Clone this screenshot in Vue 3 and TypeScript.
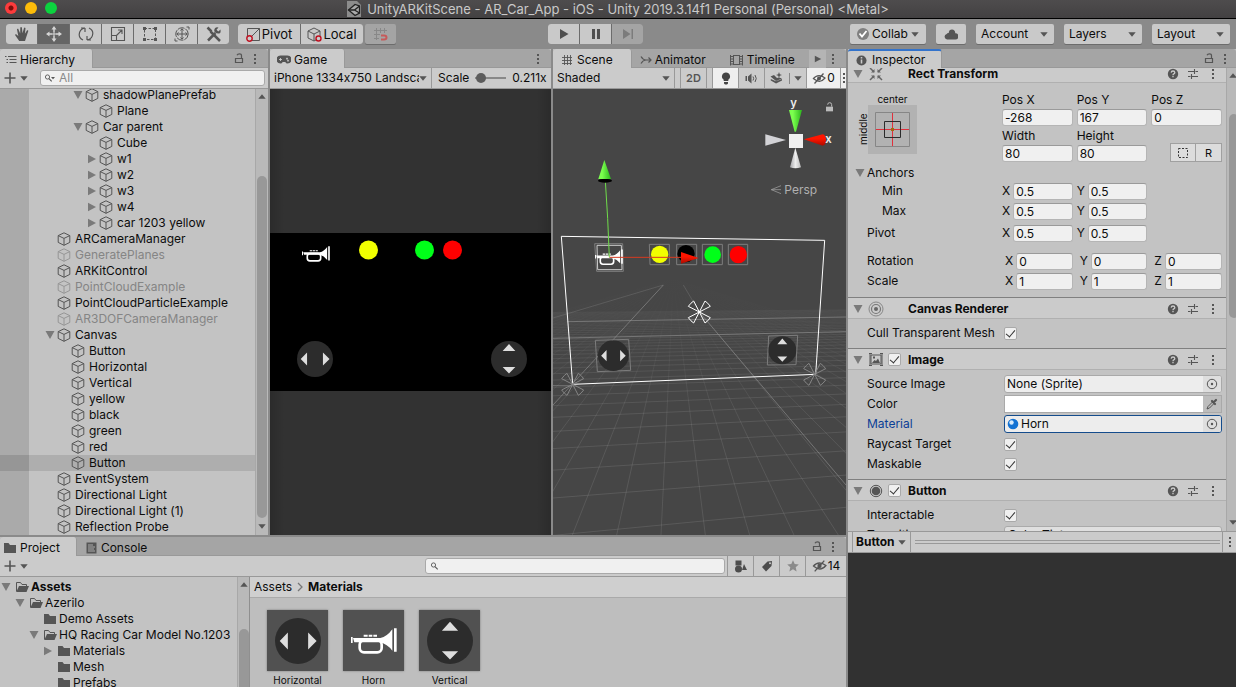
<script setup lang="ts">
import { ref } from 'vue'

interface Node { name: string; level: number; arrow?: 'open' | 'closed'; off?: boolean; selected?: boolean }
interface Folder { name: string; level: number; arrow?: 'open' | 'closed'; bold?: boolean }

const nodes: Node[] = [
  { name: 'shadowPlanePrefab', level: 2, arrow: 'open' },
  { name: 'Plane', level: 3 },
  { name: 'Car parent', level: 2, arrow: 'open' },
  { name: 'Cube', level: 3 },
  { name: 'w1', level: 3, arrow: 'closed' },
  { name: 'w2', level: 3, arrow: 'closed' },
  { name: 'w3', level: 3, arrow: 'closed' },
  { name: 'w4', level: 3, arrow: 'closed' },
  { name: 'car 1203 yellow', level: 3, arrow: 'closed' },
  { name: 'ARCameraManager', level: 0 },
  { name: 'GeneratePlanes', level: 0, off: true },
  { name: 'ARKitControl', level: 0 },
  { name: 'PointCloudExample', level: 0, off: true },
  { name: 'PointCloudParticleExample', level: 0 },
  { name: 'AR3DOFCameraManager', level: 0, off: true },
  { name: 'Canvas', level: 0, arrow: 'open' },
  { name: 'Button', level: 1 },
  { name: 'Horizontal', level: 1 },
  { name: 'Vertical', level: 1 },
  { name: 'yellow', level: 1 },
  { name: 'black', level: 1 },
  { name: 'green', level: 1 },
  { name: 'red', level: 1 },
  { name: 'Button', level: 1, selected: true },
  { name: 'EventSystem', level: 0 },
  { name: 'Directional Light', level: 0 },
  { name: 'Directional Light (1)', level: 0 },
  { name: 'Reflection Probe', level: 0 },
]

const folders: Folder[] = [
  { name: 'Assets', level: 0, arrow: 'open', bold: true },
  { name: 'Azerilo', level: 1, arrow: 'open' },
  { name: 'Demo Assets', level: 2 },
  { name: 'HQ Racing Car Model No.1203', level: 2, arrow: 'open' },
  { name: 'Materials', level: 3, arrow: 'closed' },
  { name: 'Mesh', level: 3 },
  { name: 'Prefabs', level: 3 },
]

const materials = [
  { name: 'Horizontal', icon: 'dial-h' },
  { name: 'Horn', icon: 'horn' },
  { name: 'Vertical', icon: 'dial-v' },
]

const tools = ['hand', 'move', 'rotate', 'scale', 'rect', 'transform', 'custom']
const menus = ['Account', 'Layers', 'Layout']

const vectors = ref([
  { label: 'Min', kind: 'anchor', axes: [['X', '0.5'], ['Y', '0.5']] },
  { label: 'Max', kind: 'anchor', axes: [['X', '0.5'], ['Y', '0.5']] },
  { label: 'Pivot', kind: 'pivot', axes: [['X', '0.5'], ['Y', '0.5']] },
  { label: 'Rotation', kind: 'rotation', axes: [['X', '0'], ['Y', '0'], ['Z', '0']] },
  { label: 'Scale', kind: 'size', axes: [['X', '1'], ['Y', '1'], ['Z', '1']] },
])
const position = ref([['Pos X', '-268'], ['Pos Y', '167'], ['Pos Z', '0']])
const size = ref([['Width', '80'], ['Height', '80']])
const scale = ref(5)
const cull = ref(true)
const imageOn = ref(true)
const buttonOn = ref(true)
const raycast = ref(true)
const maskable = ref(true)
const interactable = ref(true)
const color = ref('#ffffff')

// Ground plane of the scene view: rows recede towards the horizon, rays fan out from it.
const horizon = 147
const rows = Array.from({ length: 40 }, (_, k) => ({
  y1: horizon + 1 / (0.0013 + 0.000222 * k),
  y2: horizon + 1 / (0.00146 + 0.00024 * k),
  o: Math.max(0.06, 0.18 - k * 0.004),
}))
const rays = Array.from({ length: 40 }, (_, k) => 67 + 133 * (k - 18))
</script>

<template>
  <svg class="sprite" aria-hidden="true">
    <symbol id="cube" viewBox="0 0 14 14"><path d="M7 .8 12.8 3.6V10.4L7 13.3 1.2 10.4V3.6ZM1.2 3.6 7 6.4 12.8 3.6M7 6.4V13.3" fill="none" stroke="currentColor" stroke-linejoin="round" /></symbol>
    <symbol id="down" viewBox="0 0 10 10"><path d="M.5 1h9L5 9Z" fill="currentColor" /></symbol>
    <symbol id="right" viewBox="0 0 10 10"><path d="M1 .8v8.4L9 5Z" fill="currentColor" /></symbol>
    <symbol id="caret" viewBox="0 0 8 5"><path d="M.3.3h7.4L4 4.7Z" fill="currentColor" /></symbol>
    <symbol id="caret-up" viewBox="0 0 8 5"><path d="M.3 4.7h7.4L4 .3Z" fill="currentColor" /></symbol>
    <symbol id="dots" viewBox="0 0 4 12"><path d="M1 1h2v2H1zM1 5h2v2H1zM1 9h2v2H1z" fill="currentColor" /></symbol>
    <symbol id="lock" viewBox="0 0 10 11"><path d="M1.500 5.500h7v4h-7ZM7.500 5V2.600Q7.500.8 5.500.8T3 2.200" fill="none" stroke="currentColor" stroke-width="1.200" /></symbol>
    <symbol id="list" viewBox="0 0 12 10"><path d="M3 1.500h8.500M4.500 4.500h7M4.500 7.500h7" stroke="currentColor" fill="none" /><path d="M0 1h1.500v1H0zM1.500 4H3v1H1.500zM1.500 7H3v1H1.500z" fill="currentColor" /></symbol>
    <symbol id="pad" viewBox="0 0 14 9"><path d="M3.500.5h7A4 4 0 0 1 10.500 8.500Q9 8.500 8.300 7H5.700Q5 8.500 3.500 8.500a4 4 0 0 1 0-8Z" fill="currentColor" /><path d="M2 4.500h3M3.500 3v3M9.500 3.200h1v1h-1zM10.500 5.200h1v1h-1z" stroke="#cbcbcb" stroke-width=".9" /></symbol>
    <symbol id="hash" viewBox="0 0 12 12"><path d="M3.500 1v10M6.500 1v10M9.500 1v10M1 3.500h10M1 6.500h10M1 9.500h10" stroke="currentColor" stroke-width=".9" /></symbol>
    <symbol id="anim" viewBox="0 0 12 12"><path d="M1 2.500Q3 6 6 6h5M1 9.500Q3 6 6 6M8.500 3.500 11 6 8.500 8.500" fill="none" stroke="currentColor" stroke-width="1.200" /></symbol>
    <symbol id="film" viewBox="0 0 13 12"><path d="M3.500 1v10M9.500 1v10M3.500 1.500h6M3.500 10.500h6M.5 1v10.500M12.500 1v10.500" stroke="currentColor" fill="none" /><path d="M1 2.500h2M1 5h2M1 7.500h2M1 10h2M10 2.500h2M10 5h2M10 7.500h2M10 10h2" stroke="currentColor" /></symbol>
    <symbol id="info" viewBox="0 0 12 12"><circle cx="6" cy="6" r="5.500" fill="currentColor" /><path d="M6 5v4.300M6 2.300v1.500" stroke="#cbcbcb" stroke-width="1.700" /></symbol>
    <symbol id="help" viewBox="0 0 12 12"><circle cx="6" cy="6" r="5.200" fill="currentColor" /><path d="M4.200 4.600Q4.300 3 6 3T7.800 4.500Q7.800 5.400 6.800 5.800 6 6.200 6 7.200M6 8v1.300" fill="none" stroke="#cbcbcb" stroke-width="1.300" /></symbol>
    <symbol id="preset" viewBox="0 0 12 12"><path d="M1 3.500h6M8.500 3.500H11M1 8.500h2.500M5 8.500h6M7.500 1v5M4.500 6v5" stroke="currentColor" stroke-width="1.100" /></symbol>
    <symbol id="search" viewBox="0 0 12 10"><circle cx="4.500" cy="4" r="2.100" fill="none" stroke="currentColor" stroke-width=".9" /><path d="m6 5.600 2.700 2.700" stroke="currentColor" stroke-width="1.100" /></symbol>
    <symbol id="search-menu" viewBox="0 0 12 10"><circle cx="3.500" cy="4" r="2.100" fill="none" stroke="currentColor" stroke-width=".9" /><path d="m5 5.600 2.700 2.700" stroke="currentColor" stroke-width="1.100" /><path d="M7 4h4L9 6.200Z" fill="currentColor" /></symbol>
    <symbol id="plus" viewBox="0 0 12 12"><path d="M6 .5v11M.5 6h11" stroke="currentColor" stroke-width="1.600" /></symbol>
    <symbol id="folder" viewBox="0 0 14 12"><path d="M1 1h4.500l1.500 2h6v8H1Z" fill="currentColor" /></symbol>
    <symbol id="folder-open" viewBox="0 0 14 12"><path d="M1.500 10.500V1.500H5.500L7 3.500h4.500V5" fill="none" stroke="currentColor" /><path d="M4 5h10l-2.500 6H1.300Z" fill="currentColor" /></symbol>
    <symbol id="console" viewBox="0 0 11 12"><path d="M.5.500h10v11H.5Z" fill="currentColor" /><path d="M2 3h5M2 5h7M2 7h6M2 9h7" stroke="#b5b5b5" stroke-width=".9" /></symbol>
    <symbol id="eye" viewBox="0 0 14 11"><path d="M1 6q5-6 12-1-5 6-11 1" fill="none" stroke="currentColor" stroke-width="1.200" /><circle cx="7" cy="5.500" r="2" fill="currentColor" /><path d="m2.500 10.500 9-10" stroke="currentColor" stroke-width="1.300" /></symbol>
    <symbol id="target" viewBox="0 0 12 12"><circle cx="6" cy="6" r="4.700" fill="none" stroke="currentColor" /><circle cx="6" cy="6" r="1.200" fill="currentColor" /></symbol>
    <symbol id="hand" viewBox="0 0 16 16"><path d="M5.200 15 1.200 9.300Q.8 8 2.200 8.300L4.300 10 3 3.500Q3 2.300 4.200 2.800L6.200 7.500 6.300 1.500Q7 .5 7.900 1.500L8.500 7.200 10 1.900Q11 1.200 11.500 2.200L10.900 7.800 13.100 4.300Q14.300 3.800 14.300 5L12.300 11 11 15Z" fill="currentColor" /></symbol>
    <symbol id="move" viewBox="0 0 16 16"><path d="M8 2v12M2 8h12" stroke="currentColor" stroke-width="1.500" stroke-dasharray="4.500 3" /><path d="M8 0l2.500 3.500h-5ZM8 16l2.500-3.500h-5ZM0 8l3.500-2.500v5ZM16 8l-3.500-2.500v5Z" fill="currentColor" /><path d="M6.500 8h3M8 6.500v3" stroke="currentColor" /></symbol>
    <symbol id="rotate" viewBox="0 0 16 16"><path d="M5 14Q1 12 1.200 8.500 1.500 3 7 2M7 2H3M7 2v4M11 2q4 2 3.800 5.500Q14.500 13 9 14M9 14h4M9 14v-4" fill="none" stroke="currentColor" stroke-width="1.200" /></symbol>
    <symbol id="scale" viewBox="0 0 16 16"><path d="M1.500 1.500h13v13h-13ZM1.500 9.500h5v5M6.500 9.500 12 4M8 4h4v4" fill="none" stroke="currentColor" stroke-width="1.100" /></symbol>
    <symbol id="rect" viewBox="0 0 16 16"><path d="M2.500 2.500h11v11h-11Z" fill="none" stroke="currentColor" stroke-dasharray="2.500 1.500" /><path d="M1 1h3v3H1zM12 1h3v3h-3zM1 12h3v3H1zM12 12h3v3h-3z" fill="currentColor" /></symbol>
    <symbol id="transform" viewBox="0 0 16 16"><circle cx="8" cy="8" r="6.200" fill="none" stroke="currentColor" stroke-dasharray="7 1" /><path d="M8 3v10M3 8h10M6.500 4.500 8 2.800 9.500 4.500M6.500 11.500 8 13.200l1.500-1.700M4.500 6.500 2.800 8l1.700 1.500M11.500 6.500 13.200 8l-1.700 1.500M12.500 1H15v2.500M1 12.500V15h2.500" fill="none" stroke="currentColor" /></symbol>
    <symbol id="custom" viewBox="0 0 16 16"><path d="M4.500 5.500 14 15M1.500 1.500 5.500 5.500" stroke="currentColor" stroke-width="2.500" /><path d="M2 14.500 9.500 7" stroke="currentColor" stroke-width="2.500" /><path d="M14.500 3.500 12.300 5.500 10.500 3.700 12.500 1.500Q9.500.5 8.500 3T9.200 6.600 13 7.500 14.500 3.500Z" fill="currentColor" /></symbol>
    <symbol id="star" viewBox="0 0 12 12"><path d="m6 .3 1.700 3.800 4.100.4-3.100 2.800.9 4.100L6 9.300l-3.600 2.100.9-4.100L.2 4.500l4.100-.4Z" fill="currentColor" /></symbol>
    <symbol id="horn" viewBox="0 0 138 78"><path d="M0 27h5v18H0ZM6 30h82q20-4 36-26v64q-16-20-36-25H10ZM129 1h8v70h-8ZM38 20h12v6H38ZM53 20h11v6H53ZM67 20h11v6H67Z" fill="#fff" /><rect x="26" y="37" width="66" height="36" rx="13" fill="none" stroke="#fff" stroke-width="8" /></symbol>
    <symbol id="dial-h" viewBox="0 0 136 136"><circle cx="68" cy="68" r="68" fill="#2c2c2c" /><path d="M14 68 38 43v50ZM123 68 98 43v50Z" fill="#dedede" /></symbol>
    <symbol id="dial-v" viewBox="0 0 136 136"><circle cx="68" cy="68" r="68" fill="#2c2c2c" /><path d="M68 11 44 38h48ZM68 123 44 98h48Z" fill="#dedede" /></symbol>
    <symbol id="pivot-mark" viewBox="-40 -40 80 80"><path d="M0 0-33-17Q-25-28-17-33ZM0 0 17-33Q25-28 33-17ZM0 0 33 17Q25 28 17 33ZM0 0-17 33Q-25 28-33 17Z" fill="none" stroke="currentColor" stroke-width="3" /></symbol>
  </svg>

  <div class="app">
    <header class="title">
      <div class="lights"><button class="light close" aria-label="Close"></button><button class="light min" aria-label="Minimize"></button><button class="light zoom" aria-label="Zoom"></button></div>
      <div class="caption">
        <svg width="14" height="16" viewBox="0 0 14 16"><path d="M0 0h10l4 4v12H0Z" fill="#8c8c8c" /><path d="M1.500 9 8 3.500 12.500 5v7L8 14.500Z" fill="#aaa" stroke="#222" stroke-width="1.300" /><path d="M1.500 9H7.500L12.500 5M7.500 9 12.500 12" stroke="#222" stroke-width="1.300" fill="none" /></svg>
        <span>UnityARKitScene - AR_Car_App - iOS - Unity 2019.3.14f1 Personal (Personal) &lt;Metal&gt;</span>
      </div>
    </header>

    <div class="toolbar">
      <div class="group tools">
        <button v-for="(t, i) in tools" :key="t" class="btn" :class="{ on: i === 1 }" :aria-label="t"><svg width="16" height="16"><use :href="'#' + t" /></svg></button>
      </div>
      <div class="group pivots">
        <button class="btn"><svg width="15" height="15" viewBox="0 0 15 15"><path d="M1.500 1.500h12v12h-12ZM3 12 13.500 1.500" fill="none" stroke="#555" /><circle cx="3.500" cy="11.500" r="2.700" fill="#cbcbcb" stroke="#c01020" stroke-width="1.400" /></svg>Pivot</button>
        <button class="btn"><svg width="15" height="15" viewBox="0 0 15 15"><path d="M7 1 13 4v7L7 14 1 11V4ZM1 4 7 7 13 4M7 7v7" fill="none" stroke="#555" /><circle cx="11.500" cy="11.500" r="2.500" fill="#cbcbcb" stroke="#c01020" stroke-width="1.400" /></svg>Local</button>
      </div>
      <button class="btn snap" disabled aria-label="Grid snapping"><svg width="15" height="15" viewBox="0 0 15 15"><path d="M3.500 1v12M7.500 1v5M11.500 1v5M1 3.500h13M1 7.500h6M1 11.500h5" stroke="#888" /><path d="M8 8.500h3q2.500 0 2.500 2t-2.500 2H8" fill="none" stroke="#c65a5a" stroke-width="2" /></svg></button>
      <span class="space-a"></span>
      <div class="group play">
        <button class="btn" aria-label="Play"><svg width="12" height="12" viewBox="0 0 12 12"><path d="M2 1v10l8.500-5Z" fill="#4f4f4f" /></svg></button>
        <button class="btn" aria-label="Pause"><svg width="12" height="12" viewBox="0 0 12 12"><path d="M2 1h3v10H2ZM7 1h3v10H7Z" fill="#4f4f4f" /></svg></button>
        <button class="btn" disabled aria-label="Step"><svg width="12" height="12" viewBox="0 0 12 12"><path d="M1 1v10l7.500-5ZM9.500 1h1.500v10H9.500Z" fill="#7c7c7c" /></svg></button>
      </div>
      <span class="space-b"></span>
      <button class="btn collab"><svg width="12" height="12" viewBox="0 0 12 12"><circle cx="6" cy="6" r="6" fill="#808080" /><path d="m2.500 5.500 2.500 3L9.500 3" fill="none" stroke="#fff" stroke-width="1.800" /></svg>Collab<svg class="caret" width="8" height="5"><use href="#caret" /></svg></button>
      <button class="btn cloud" aria-label="Cloud"><svg width="14" height="11" viewBox="0 0 14 11"><path d="M3 10.500a2.800 2.800 0 0 1-.3-5.500Q3.500 3.500 4.700 4 5 .6 8 .6t3.300 3.600a3 3 0 0 1 0 6.300Z" fill="#555" /></svg></button>
      <span v-for="m in menus" :key="m" class="drop"><select class="btn" :aria-label="m"><option>{{ m }}</option></select><svg width="8" height="5"><use href="#caret" /></svg></span>
    </div>

    <main class="work">
      <div class="left">
        <div class="top">
          <section class="panel hierarchy">
            <div class="tabs">
              <button class="tab active"><svg width="12" height="10"><use href="#list" /></svg>Hierarchy</button>
              <span class="end"><button class="ghost" aria-label="Lock"><svg width="10" height="11"><use href="#lock" /></svg></button><button class="ghost" aria-label="Menu"><svg width="4" height="12"><use href="#dots" /></svg></button></span>
            </div>
            <div class="bar">
              <button class="ghost add" aria-label="Create"><svg width="12" height="12"><use href="#plus" /></svg><svg width="8" height="5"><use href="#caret" /></svg></button>
              <label class="search"><svg width="12" height="10"><use href="#search-menu" /></svg><input type="text" placeholder="All" aria-label="Search hierarchy" /></label>
            </div>
            <div class="scroller">
              <ul class="nodes">
                <li v-for="(n, i) in nodes" :key="i" :class="{ off: n.off, selected: n.selected }">
                  <div class="node" :style="{ paddingLeft: 14 + n.level * 14 + 'px' }">
                    <span class="twist"><svg v-if="n.arrow" width="10" height="10"><use :href="n.arrow === 'open' ? '#down' : '#right'" /></svg></span>
                    <svg class="cube" width="14" height="14"><use href="#cube" /></svg>{{ n.name }}
                  </div>
                </li>
              </ul>
              <div class="scroll"><svg width="8" height="5"><use href="#caret-up" /></svg><i class="thumb"></i><svg width="8" height="5"><use href="#caret" /></svg></div>
            </div>
          </section>

          <section class="panel game">
            <div class="tabs">
              <button class="tab active"><svg width="14" height="9"><use href="#pad" /></svg>Game</button>
              <span class="end"><button class="ghost" aria-label="Menu"><svg width="4" height="12"><use href="#dots" /></svg></button></span>
            </div>
            <div class="bar">
              <span class="pick"><select aria-label="Resolution"><option>iPhone 1334x750 Landscape (1334x750)</option></select><svg width="8" height="5"><use href="#caret" /></svg></span>
              <label class="scale">Scale<input v-model="scale" type="range" min="0" max="100" /><output>0.211x</output></label>
            </div>
            <div class="view">
              <svg class="screen" viewBox="0 0 281 158">
                <rect width="281" height="158" />
                <use href="#horn" x="32" y="13" width="28" height="16" />
                <circle cx="98.500" cy="17" r="9.500" fill="#f1ff00" />
                <circle cx="154.500" cy="17" r="9.500" fill="#00ff19" />
                <circle cx="182.500" cy="17" r="9.500" fill="#f00" />
                <use href="#dial-h" x="27" y="108" width="36" height="36" />
                <use href="#dial-v" x="221" y="108" width="36" height="36" />
              </svg>
            </div>
          </section>

          <section class="panel scene">
            <div class="tabs">
              <button class="tab active"><svg width="12" height="12"><use href="#hash" /></svg>Scene</button>
              <button class="tab"><svg width="12" height="12"><use href="#anim" /></svg>Animator</button>
              <button class="tab time"><svg width="13" height="12"><use href="#film" /></svg>Timeline</button>
              <span class="end"><button class="ghost more" aria-label="More tabs"><svg width="8" height="8"><use href="#right" /></svg></button><button class="ghost" aria-label="Menu"><svg width="4" height="12"><use href="#dots" /></svg></button></span>
            </div>
            <div class="bar">
              <span class="pick"><select aria-label="Draw mode"><option>Shaded</option></select><svg width="8" height="5"><use href="#caret" /></svg></span>
              <i class="slot"></i>
              <button class="cell two">2D</button>
              <i class="slot"></i>
              <button class="cell lit" aria-label="Lighting"><svg width="10" height="13" viewBox="0 0 10 13"><path d="M5 .5a4 4 0 0 1 2.300 7.300V9H2.700V7.800A4 4 0 0 1 5 .5ZM3 10h4v1.500L6 12.500H4l-1-1Z" fill="#444" /></svg></button>
              <button class="cell" aria-label="Audio"><svg width="13" height="11" viewBox="0 0 13 11"><path d="M.5 3H2v5H.5ZM3 3.500 6.500.5v10L3 7.500Z" fill="#555" /><path d="M8 3.500q1.300 2 0 4M10 2q2.500 3.500 0 7" fill="none" stroke="#555" /></svg></button>
              <button class="cell fx" aria-label="Effects"><svg width="13" height="12" viewBox="0 0 13 12"><path d="M.5 4.500 4 3l3 3 2-.5 3 1-6 2.500ZM.8 7 6 9.200 12 7v1.500L6 11.500.8 8.500Z" fill="#555" /><path d="m9 0 .8 2.200L12 3l-2.200.8L9 6l-.8-2.200L6 3l2.200-.8Z" fill="#555" /></svg><i></i><svg width="8" height="5"><use href="#caret" /></svg></button>
              <button class="cell lit vis"><svg width="14" height="11"><use href="#eye" /></svg>0</button>
              <button class="cell lit cut" aria-label="Camera"><svg width="4" height="12"><use href="#dots" /></svg></button>
            </div>
            <svg class="world" viewBox="9 -423 879 1338" preserveAspectRatio="xMidYMid slice">
              <defs>
                <linearGradient id="fade" x1="0" y1="147" x2="0" y2="620" gradientUnits="userSpaceOnUse"><stop offset="0" stop-color="#464646" /><stop offset=".25" stop-color="#464646" stop-opacity=".88" /><stop offset=".6" stop-color="#464646" stop-opacity=".45" /><stop offset="1" stop-color="#464646" stop-opacity="0" /></linearGradient>
                <linearGradient id="cone-g"><stop offset=".3" stop-color="#7bff4e" /><stop offset="1" stop-color="#2bb51c" /></linearGradient>
                <linearGradient id="cone-w"><stop offset="0" stop-color="#a5a5a8" /><stop offset=".5" stop-color="#eee" /><stop offset="1" stop-color="#bbb" /></linearGradient>
                <linearGradient id="cone-r" x2="0" y2="1"><stop offset=".4" stop-color="#ff1500" /><stop offset="1" stop-color="#a80c00" /></linearGradient>
              </defs>
              <g stroke="#b4b4b4" stroke-width="3">
                <line v-for="x in rays" :key="'c' + x" x1="370" y1="147" :x2="x" y2="915" stroke-opacity=".17" />
              </g>
              <path d="M0 140H900V620H0Z" fill="url(#fade)" />
              <g stroke="#b4b4b4" stroke-width="3">
                <line v-for="(r, i) in rows" :key="'r' + i" x1="9" :y1="r.y1" x2="888" :y2="r.y2" :stroke-opacity="r.o" />
              </g>
              <g stroke="#9a9a9a" stroke-width="3" stroke-opacity=".55" fill="none">
                <path d="M340 165 9 525M448 246 888 765M9 325 888 305M52 275 888 261M9 467H68" />
                <path d="M400 165 448 246M9 264 340 165" stroke-opacity=".25" />
              </g>
              <path d="M34 19 824 31 797 433 68 463Z" fill="none" stroke="#fff" stroke-width="3" />
              <g fill="none" stroke="#7d7d7d" stroke-width="3">
                <path d="M134 41 218 41 220 124 140 124ZM298 43H358V104H300ZM380 43H440V104H380ZM457 43H517V104H457ZM535 43H593V104H535Z" />
                <path d="M136 331 236 328 242 421 142 425ZM656 318 743 316 738 404 652 405Z" />
              </g>
              <path d="M141 46H214L216 119H143Z" fill="none" stroke="#ccc" stroke-width="3" />
              <use href="#horn" x="135" y="57" width="84" height="50" />
              <circle cx="329" cy="73" r="26" fill="#f1ff00" /><circle cx="408" cy="71" r="26" fill="#000" /><circle cx="488" cy="74" r="25" fill="#00ff19" /><circle cx="565" cy="74" r="26" fill="#f00" />
              <use href="#dial-h" x="142" y="331" width="96" height="92" />
              <use href="#dial-v" x="655" y="318" width="84" height="86" />
              <path d="M178 82H393" stroke="#d63a20" stroke-width="3" /><path d="M393 66 446 84 393 101Z" fill="url(#cone-r)" />
              <path d="M178 82 173-35 166-147" stroke="#6fdc4a" stroke-width="3" fill="none" />
              <ellipse cx="165" cy="-148" rx="21" ry="6" fill="#000" /><path d="M163-210 183-153H145Z" fill="url(#cone-g)" />
              <use href="#pivot-mark" x="408" y="206" width="80" height="80" class="mark main" />
              <use href="#pivot-mark" x="28" y="423" width="80" height="80" class="mark" />
              <use href="#pivot-mark" x="754" y="393" width="80" height="80" class="mark" />
              <path d="M717-360H756L738-295H734Z" fill="url(#cone-g)" />
              <path d="M762-272 818-287Q828-285 828-270T818-253Z" fill="url(#cone-r)" />
              <path d="M708-270 646-287V-253Z" fill="#d2d2d6" />
              <path d="M736-247 720-188Q736-182 753-188Z" fill="url(#cone-w)" />
              <path d="M717-288H759V-246H717Z" fill="#f0f0f0" />
              <text x="721" y="-370" class="axis">y</text><text x="826" y="-262" class="axis">x</text>
              <path d="M693-133 664-121 693-109M664-121H693" fill="none" stroke="#a9a9a9" stroke-width="2" />
              <text x="703" y="-108" class="persp">Persp</text>
              <path d="M828-370H849V-356H828Z" fill="#bbb" /><path d="M845-370V-376Q845-382 839-382T833-376" fill="none" stroke="#bbb" stroke-width="3" />
            </svg>
          </section>
        </div>

        <section class="panel project">
          <div class="tabs">
            <button class="tab active"><svg width="14" height="12"><use href="#folder" /></svg>Project</button>
            <button class="tab"><svg width="11" height="12"><use href="#console" /></svg>Console</button>
            <span class="end"><button class="ghost" aria-label="Lock"><svg width="10" height="11"><use href="#lock" /></svg></button><button class="ghost" aria-label="Menu"><svg width="4" height="12"><use href="#dots" /></svg></button></span>
          </div>
          <div class="bar">
            <button class="ghost add" aria-label="Create"><svg width="12" height="12"><use href="#plus" /></svg><svg width="8" height="5"><use href="#caret" /></svg></button>
            <label class="search"><svg width="12" height="10"><use href="#search" /></svg><input type="text" aria-label="Search project" /></label>
            <button class="cell" aria-label="Search by type"><svg width="13" height="13" viewBox="0 0 13 13"><path d="M1.500.5h6v5h-6ZM10 4l3 6H8Z" fill="#4c4c4c" /><circle cx="4.500" cy="9" r="3.500" fill="#4c4c4c" /></svg></button>
            <button class="cell" aria-label="Search by label"><svg width="12" height="12" viewBox="0 0 12 12"><path d="M1 7 6.500 1.500 11 1l-.5 5L5 11.500Z" fill="#4c4c4c" /><circle cx="9" cy="3.200" r="1" fill="#cbcbcb" /></svg></button>
            <button class="cell fav" aria-label="Favorites"><svg width="12" height="12"><use href="#star" /></svg></button>
            <button class="cell hidden"><svg width="15" height="12"><use href="#eye" /></svg>14</button>
          </div>
          <div class="browser">
            <ul class="folders">
              <li v-for="f in folders" :key="f.name" :class="{ bold: f.bold }" :style="{ paddingLeft: f.level * 14 + 'px' }">
                <span class="twist"><svg v-if="f.arrow" width="10" height="10"><use :href="f.arrow === 'open' ? '#down' : '#right'" /></svg></span>
                <svg width="14" height="12"><use :href="f.arrow === 'open' ? '#folder-open' : '#folder'" /></svg>{{ f.name }}
              </li>
            </ul>
            <div class="scroll long"><svg width="8" height="5"><use href="#caret-up" /></svg><i class="thumb"></i></div>
            <div class="assets">
              <nav class="crumbs"><a href="#">Assets</a><svg width="6" height="10" viewBox="0 0 6 10"><path d="m1 1 4 4-4 4" fill="none" stroke="#777" stroke-width="1.300" /></svg><a href="#" class="bold">Materials</a></nav>
              <div class="tiles">
                <figure v-for="m in materials" :key="m.name"><div class="thumb-img"><svg width="46" height="46"><use :href="'#' + m.icon" /></svg></div><figcaption>{{ m.name }}</figcaption></figure>
              </div>
            </div>
          </div>
        </section>
      </div>

      <aside class="panel inspector">
        <div class="tabs">
          <button class="tab active"><svg width="11" height="11"><use href="#info" /></svg>Inspector</button>
          <span class="end"><button class="ghost" aria-label="Lock"><svg width="10" height="11"><use href="#lock" /></svg></button><button class="ghost" aria-label="Menu"><svg width="4" height="12"><use href="#dots" /></svg></button></span>
        </div>
        <div class="scroller">
          <div class="components">
            <h2 class="head first"><svg width="10" height="10"><use href="#down" /></svg><svg class="kind" width="14" height="14" viewBox="0 0 14 14"><path d="m1 1 4 4M13 1 9 5M1 13l4-4M13 13 9 9" stroke="#666" stroke-width="1.500" /><path d="M5.500 2v3.500H2ZM8.500 2v3.500H12ZM5.500 12V8.500H2ZM8.500 12V8.500H12Z" fill="#666" /></svg><span class="gap"></span>Rect Transform<span class="acts"><svg width="12" height="12"><use href="#help" /></svg><svg width="12" height="12"><use href="#preset" /></svg><svg width="4" height="12"><use href="#dots" /></svg></span></h2>
            <div class="rect">
              <div class="presets">
                <span class="hor">center</span><span class="ver">middle</span>
                <button aria-label="Anchor presets"><svg width="49" height="49" viewBox="0 0 49 49"><path d="M7.500 7.500h34v34h-34Z" fill="none" stroke="#868686" /><path d="M24.500 8v33M8 24.500h33" stroke="#e0303c" /><path d="M16.500 16.500h16v16h-16Z" fill="none" stroke="#2b2b2b" /><path d="M23 23h3v3h-3Z" fill="#a06a10" /></svg></button>
              </div>
              <label v-for="p in position" :key="p[0]">{{ p[0] }}<input v-model="p[1]" type="text" /></label>
              <label v-for="p in size" :key="p[0]">{{ p[0] }}<input v-model="p[1]" type="text" /></label>
              <div class="modes"><button aria-label="Blueprint mode"><svg width="12" height="12" viewBox="0 0 12 12"><path d="M1.500 1.500h9v9h-9Z" fill="none" stroke="#333" stroke-dasharray="2 1.500" /></svg></button><button>R</button></div>
            </div>
            <div class="fold"><svg width="10" height="10"><use href="#down" /></svg>Anchors</div>
            <div v-for="v in vectors" :key="v.label" class="vec" :class="[v.kind, { wide: v.axes.length === 3 }]">
              <span class="name">{{ v.label }}</span>
              <label v-for="a in v.axes" :key="a[0]">{{ a[0] }}<input v-model="a[1]" type="text" /></label>
            </div>

            <h2 class="head canvas"><svg width="10" height="10"><use href="#down" /></svg><svg class="kind" width="16" height="16" viewBox="0 0 16 16"><circle cx="8" cy="8" r="7" fill="none" stroke="#888" /><circle cx="8" cy="8" r="4.500" fill="none" stroke="#777" stroke-width="1.200" /><circle cx="8" cy="8" r="2" fill="#666" /></svg><span class="gap"></span>Canvas Renderer<span class="acts"><svg width="12" height="12"><use href="#help" /></svg><svg width="12" height="12"><use href="#preset" /></svg><svg width="4" height="12"><use href="#dots" /></svg></span></h2>
            <div class="props">
              <div class="prop"><label for="cull">Cull Transparent Mesh</label><input id="cull" v-model="cull" type="checkbox" /></div>
            </div>

            <h2 class="head"><svg width="10" height="10"><use href="#down" /></svg><svg class="kind" width="16" height="16" viewBox="0 0 16 16"><path d="M3 3h10v9H3Z" fill="none" stroke="#555" /><path d="M1 1.500h3M2 1v3M12 1.500h3M14 1v3M1 13.500h3M2 11v3M12 13.500h3M14 11v3M2 4v7M14 4v7" stroke="#555" /><path d="m4 11 2.500-3 1.500 1 2-2.500 2 4.500ZM5 4.500h2v2H5Z" fill="#555" /></svg><input v-model="imageOn" type="checkbox" aria-label="Image enabled" />Image<span class="acts"><svg width="12" height="12"><use href="#help" /></svg><svg width="12" height="12"><use href="#preset" /></svg><svg width="4" height="12"><use href="#dots" /></svg></span></h2>
            <div class="props">
              <div class="prop"><label for="sprite">Source Image</label><div class="object"><input id="sprite" type="text" value="None (Sprite)" readonly /><button aria-label="Select sprite"><svg width="12" height="12"><use href="#target" /></svg></button></div></div>
              <div class="prop"><label for="color">Color</label><div class="object swatch"><input id="color" v-model="color" type="color" /><button aria-label="Pick color"><svg width="12" height="12" viewBox="0 0 12 12"><path d="M1 11 2 8.500 6.500 4 8 5.500 3.500 10Z" fill="none" stroke="#555" /><path d="M6 3l3 3M7.500 4.500 10 2" stroke="#555" stroke-width="2.200" stroke-linecap="round" /></svg></button></div></div>
              <div class="prop active"><label for="material">Material</label><div class="object"><svg width="12" height="12" viewBox="0 0 12 12"><circle cx="6" cy="6" r="5.300" fill="#1372d3" /><circle cx="4.500" cy="4.500" r="2.200" fill="#d5e9fb" /></svg><input id="material" type="text" value="Horn" readonly /><button aria-label="Select material"><svg width="12" height="12"><use href="#target" /></svg></button></div></div>
              <div class="prop"><label for="raycast">Raycast Target</label><input id="raycast" v-model="raycast" type="checkbox" /></div>
              <div class="prop"><label for="mask">Maskable</label><input id="mask" v-model="maskable" type="checkbox" /></div>
            </div>

            <h2 class="head"><svg width="10" height="10"><use href="#down" /></svg><svg class="kind" width="16" height="16" viewBox="0 0 16 16"><circle cx="8" cy="8" r="5.700" fill="none" stroke="#555" /><circle cx="8" cy="8" r="4.300" fill="#555" /></svg><input v-model="buttonOn" type="checkbox" aria-label="Button enabled" />Button<span class="acts"><svg width="12" height="12"><use href="#help" /></svg><svg width="12" height="12"><use href="#preset" /></svg><svg width="4" height="12"><use href="#dots" /></svg></span></h2>
            <div class="props">
              <div class="prop"><label for="inter">Interactable</label><input id="inter" v-model="interactable" type="checkbox" /></div>
              <div class="prop"><label for="trans">Transition</label><select id="trans"><option>Color Tint</option></select></div>
            </div>
          </div>
          <div class="scroll side"><svg width="8" height="5"><use href="#caret-up" /></svg><i class="thumb"></i><svg width="8" height="5"><use href="#caret" /></svg></div>
        </div>
        <div class="preview-bar"><button>Button<svg width="8" height="5"><use href="#caret" /></svg></button><i class="grip"></i><span class="menu"><svg width="4" height="12"><use href="#dots" /></svg></span></div>
        <div class="preview"></div>
      </aside>
    </main>
  </div>
</template>

<style>
body { margin: 0; background: #8a8a8a; }
</style>

<style scoped>
.app, .app * { box-sizing: border-box; }
.sprite { position: absolute; width: 0; height: 0; }
.app { display: flex; flex-direction: column; height: 100vh; overflow: hidden; font: 12px/16px Inter, "Liberation Sans", sans-serif; font-feature-settings: "calt" 0; color: #0c0c0c; background: #8a8a8a; }
svg { flex: none; color: #555; }
button, input, select { font: inherit; font-feature-settings: inherit; color: inherit; margin: 0; padding: 0; border: 0; background: none; min-width: 0; }
button { display: flex; align-items: center; justify-content: center; }
select { appearance: none; }
ul { list-style: none; margin: 0; padding: 0; }

.title { display: flex; align-items: center; height: 19px; flex: none; background: linear-gradient(#4e4c4d, #434142); border-bottom: 1px solid #000; }
.lights { display: flex; gap: 8px; padding-left: 5px; width: 65px; margin-right: -65px; margin-top: -2px; }
.light { width: 12px; height: 12px; border-radius: 50%; }
.close { background: radial-gradient(#7b0d09 2px, #fc3b3c 3px); }
.min { background: #fdbc09; }
.zoom { background: #0cd33f; }
.caption { flex: 1; display: flex; justify-content: center; gap: 6px; color: #c9c9c9; font-size: 13px; line-height: 17px; white-space: nowrap; }

.toolbar { display: flex; align-items: center; height: 30px; flex: none; padding: 0 6px; background: #8a8a8a; }
.group { display: flex; gap: 1px; background: #6c6c6c; border-radius: 3px; overflow: hidden; }
.btn { height: 20px; background: #c9c9c9; border-radius: 2px; box-shadow: 0 1px 0 #6c6c6c; }
.group .btn { border-radius: 0; box-shadow: none; }
.tools .btn { width: 31px; }
.tools .on { background: #656565; }
.on svg { color: #d6d6d6; }
.pivots { margin-left: 9px; }
.pivots .btn { width: 62px; gap: 1px; font-size: 13px; }
.snap { width: 31px; margin-left: 2px; background: #a4a4a4; }
.space-a { flex: 152; }
.space-b { flex: 206; }
.play .btn { width: 31px; }
.play .btn:disabled { background: #a4a4a4; }
.collab { width: 76px; gap: 3px; font-size: 12px; }
.cloud { width: 30px; margin-left: 10px; }
.drop { position: relative; display: block; width: 78px; margin-left: 10px; }
.drop select { width: 100%; padding-left: 5px; display: block; }
.drop svg { position: absolute; right: 6px; top: 8px; pointer-events: none; }

.work { flex: 1; min-height: 0; display: grid; grid-template-columns: minmax(0, 1fr) 388px; gap: 2px; }
.left { display: flex; flex-direction: column; gap: 2px; min-height: 0; min-width: 0; }
.top { flex: 1; min-height: 0; display: grid; grid-template-columns: 268px minmax(0, 281fr) minmax(0, 293fr); grid-template-rows: minmax(0, 1fr); gap: 2px; }
.panel { display: flex; flex-direction: column; min-height: 0; min-width: 0; background: #c3c3c3; overflow: hidden; }
.tabs { display: flex; height: 19px; flex: none; background: #a5a5a5; border-radius: 3px 3px 0 0; box-shadow: inset 0 -1px 0 #999; }
.tab { gap: 3px; padding: 2px 17px 0 5px; justify-content: flex-start; }
.tab.active { background: #cbcbcb; border-right: 1px solid #999; border-radius: 3px 3px 0 0; }
.game .tab { padding: 2px 17px 0 7px; }
.scene .tab { padding: 2px 8px 0 8px; }
.scene .tab.active { padding-right: 18px; gap: 4px; }
.scene .time { margin-left: 8px; padding-right: 0; gap: 4px; }
.project .tab { padding: 2px 16px 0 3px; }
.project .tab + .tab { padding-left: 9px; gap: 4px; }
.inspector .tab { padding: 2px 16px 0 8px; gap: 5px; }
.inspector .tab.active { border-top: 2px solid #3373cb; padding-top: 1px; }
.end { margin-left: auto; display: flex; align-items: center; gap: 9px; padding-right: 11px; }
.scene .end { gap: 5px; }
.more { width: 17px; height: 18px; background: #b4b4b4; }
.inspector .end { padding-right: 9px; }
.bar { display: flex; align-items: center; height: 21px; flex: none; background: #cbcbcb; border-bottom: 1px solid #999; }
.add { gap: 4px; margin-left: 4px; }
.search { display: flex; align-items: center; gap: 3px; height: 16px; background: #f0f0f0; border: 1px solid #a9a9a9; border-radius: 3px; padding: 0 3px; }
.hierarchy .search { flex: 1; margin: 0 3px 0 12px; }
.search input { flex: 1; outline: 0; }
.search input::placeholder { color: #8a8a8a; opacity: 1; }
.project .search { width: 300px; margin: 0 2px 0 auto; }
.cell { height: 20px; width: 26px; border-left: 1px solid #999; background: #cbcbcb; flex: none; gap: 1px; }
.cell.lit { background: #efefef; }
.hidden { width: 41px; font-size: 12px; }
.fav svg { color: #8a8a8a; }

.scroller { flex: 1; display: flex; min-height: 0; overflow: hidden; }
.nodes { flex: 1; margin-top: -2px; min-width: 0; background: #aaa; }
.nodes li { padding-left: 29px; height: 16px; }
.node { display: flex; align-items: center; height: 16px; background: #c3c3c3; white-space: nowrap; }
.node .cube { margin-right: 4px; }
.twist { width: 14px; flex: none; display: flex; justify-content: flex-start; padding-left: 2px; }
.twist svg { color: #7a7a7a; }
.off { color: #858585; }
.off .cube { color: #969696; }
.selected { background: #969696; }
.selected .node { background: #aeaeae; }
.scroll { width: 13px; flex: none; display: flex; flex-direction: column; align-items: center; padding: 5px 0 6px; background: #b9b9b9; border-left: 1px solid #a8a8a8; }
.scroll svg:last-child { margin-top: 6px; }
.thumb { flex: 1; width: 10px; border-radius: 5px; background: #989898; margin-top: 77px; }
.long { width: 12px; padding-bottom: 0; }
.long .thumb { margin-top: 42px; border-radius: 5px 5px 0 0; }
.side { width: 10px; overflow: hidden; align-items: flex-start; padding-left: 2px; }
.side .thumb { flex: none; height: 204px; margin: 36px 0 auto; }

.pick { position: relative; flex: 1; min-width: 0; display: block; }
.pick select { width: 100%; padding: 0 14px 0 4px; display: block; text-overflow: clip; overflow: hidden; }
.pick svg { position: absolute; right: 4px; top: 6px; pointer-events: none; }
.scale { display: flex; align-items: center; height: 20px; width: 120px; padding-left: 6px; gap: 6px; border-left: 1px solid #999; }
.scale input { appearance: none; width: 31px; height: 10px; background: linear-gradient(#888, #888) center / 100% 2px no-repeat; }
.scale input::-webkit-slider-thumb { appearance: none; width: 10px; height: 10px; border-radius: 50%; background: #5c5c5c; }
.game .pick select { padding-right: 12px; }
.view { flex: 1; display: flex; align-items: center; background: linear-gradient(90deg, #2b2b2b, #323232 5%, #323232 95%, #2b2b2b); }
.screen { width: 100%; }
.slot { width: 6px; height: 20px; border-left: 1px solid #999; }
.two { font-weight: 600; font-size: 11px; color: #555; }
.fx { width: 42px; gap: 4px; }
.fx i { width: 1px; height: 11px; background: #888; margin-left: 2px; }
.vis { width: 34px; }
.cut { width: 6px; overflow: hidden; }
.world { flex: 1; min-height: 0; width: 100%; background: #464646; }
.mark { color: #858585; }
.main { color: #fff; }
.axis { font-size: 34px; font-weight: 600; fill: #eee; }
.persp { font-size: 36px; fill: #b0b0b0; }

.project { height: 150px; flex: none; }
.browser { flex: 1; min-height: 0; display: flex; }
.folders { width: 237px; padding-top: 2px; overflow: hidden; }
.folders li { display: flex; align-items: center; gap: 2px; height: 16px; white-space: nowrap; }
.folders .twist { margin-right: -1px; padding-left: 1px; }
.bold { font-weight: 700; }
.assets { flex: 1; background: #bebebe; border-left: 1px solid #8f8f8f; overflow: hidden; }
.crumbs { display: flex; align-items: center; gap: 5px; height: 21px; padding-left: 4px; background: #cfcfcf; border-bottom: 1px solid #aaa; }
.crumbs a { color: inherit; text-decoration: none; }
.tiles { display: flex; gap: 15px; padding: 12px 17px; }
.tiles figure { margin: 0; width: 61px; text-align: center; font-size: 10px; line-height: 18px; }
.thumb-img { height: 61px; background: #515151; display: flex; align-items: center; justify-content: center; box-shadow: 0 0 2px #777; }

.components { flex: 1; min-width: 0; overflow: hidden; margin-top: -7px; }
.head { display: flex; align-items: center; height: 22px; margin: 0; padding: 1px 11px 0 5px; font-size: 12px; line-height: 16px; font-weight: 700; background: #cbcbcb; border-top: 1px solid #808080; border-bottom: 1px solid #b0b0b0; }
.head > svg:first-child { color: #7a7a7a; }
.head .kind { width: 16px; margin: 0 4px 0 5px; }
.gap { width: 20px; }
.head input { margin-right: 7px; }
.first { padding-top: 3px; }
.acts { margin-left: auto; display: flex; gap: 8px; align-items: center; }
.acts svg:last-child { margin: 0 0 0 4px; }
input[type="checkbox"] { appearance: none; width: 13px; height: 13px; flex: none; background: #f0f0f0; border: 1px solid #a9a9a9; border-radius: 2px; display: flex; justify-content: center; }
input[type="checkbox"]:checked::after { content: ""; width: 4px; height: 8px; border: solid #333; border-width: 0 1px 1px 0; transform: rotate(40deg); }
.components input[type="text"] { height: 17px; background: #f0f0f0; border: 1px solid #b5b5b5; border-top-color: #9a9a9a; border-radius: 3px; padding-left: 2px; width: 100%; }
.rect { display: grid; grid-template-columns: 150px repeat(3, minmax(0, 1fr)); gap: 2px 4px; padding: 9px 4px 4px 0; height: 82px; align-content: start; }
.rect label { display: block; line-height: 15px; height: 34px; }
.rect label input { display: block; margin-top: 2px; line-height: 16px; }
.presets { grid-row: span 2; display: grid; grid-template-columns: 9px 49px; grid-template-rows: 13px 49px; justify-content: start; padding-left: 11px; font-size: 10px; line-height: 14px; }
.hor { grid-column: 2; text-align: center; }
.ver { writing-mode: vertical-rl; transform: rotate(180deg); text-align: center; line-height: 9px; }
.presets button { background: #b2b2b2; }
.modes { display: flex; justify-content: flex-end; align-items: flex-end; height: 34px; }
.modes button { width: 26px; height: 19px; background: #dcdcdc; border: 1px solid #a0a0a0; font-size: 11px; }
.modes button + button { border-left: 0; }
.fold { display: flex; align-items: center; gap: 2px; height: 16px; padding-left: 7px; }
.fold svg { color: #7a7a7a; }
.vec { display: grid; grid-template-columns: 150px repeat(3, minmax(0, 1fr)); column-gap: 4px; align-items: center; height: 20px; padding-right: 4px; }
.vec .name { padding-left: 19px; }
.vec.anchor .name { padding-left: 34px; }
.vec label { display: flex; align-items: center; gap: 3px; }
.wide label { padding-left: 3px; }
.pivot { margin-top: 2px; }
.rotation { margin-top: 8px; }
.canvas { margin-top: 6px; }
.props { padding: 4px 4px 5px 19px; }
.prop { display: grid; grid-template-columns: 137px minmax(0, 1fr); align-items: center; height: 20px; }
.prop select { height: 18px; background: #dfdfdf; border: 1px solid #aaa; border-radius: 3px; padding-left: 3px; }
.object { display: flex; align-items: center; height: 18px; background: #ededed; border: 1px solid #a9a9a9; border-radius: 3px; overflow: hidden; }
.object > svg { margin-left: 2px; }
.components .object input[type="text"] { flex: 1; height: 16px; border: 0; background: none; outline: 0; }
.object button { width: 18px; height: 16px; background: #dedede; }
.swatch { border-radius: 0; }
.swatch input { flex: 1; height: 16px; background: #fff; }
.swatch input::-webkit-color-swatch-wrapper { padding: 0; }
.swatch input::-webkit-color-swatch { border: 0; }
.swatch button { background: #bdbdbd; }
.active label { color: #0b3f96; }
.active .object { border-color: #144c8c; }
.preview-bar { height: 22px; flex: none; display: flex; align-items: center; background: #cbcbcb; border-top: 1px solid #999; border-bottom: 1px solid #999; }
.preview-bar button { height: 20px; margin-left: 4px; padding: 0 4px 0 3px; gap: 3px; border: solid #999; border-width: 0 1px; font-weight: 700; }
.grip { flex: 1; height: 4px; margin: 0 2px 0 4px; border: solid #999; border-width: 1px 0; }
.menu { display: flex; align-items: center; width: 14px; height: 20px; padding-left: 5px; border-left: 1px solid #999; }
.preview { height: 134px; flex: none; background: #313131; }
</style>
